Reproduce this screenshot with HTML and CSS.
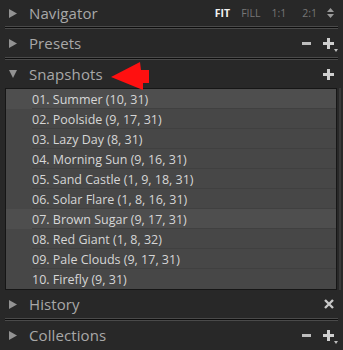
FILE: index.html
```html
<!DOCTYPE html>
<html lang="en">
<head>
    <meta charset="UTF-8">
    <title>Snapshots</title>
    <link rel="stylesheet" href="styles.css">
</head>
<body>
    <div class="panel">
        <div class="panel-header nav">
            <svg class="tri" width="8" height="9" viewBox="0 0 8 9"><polygon points="0,0 8,4.5 0,9"/></svg>
            <span class="title">Navigator</span>
            <div class="zoom-opts">
                <span class="active">FIT</span>
                <span>FILL</span>
                <span>1:1</span>
                <span class="wide">2:1</span>
                <svg class="updown" width="7" height="10" viewBox="0 0 7 10"><path d="M0 4 L3.5 0 L7 4 Z M0 6 L7 6 L3.5 10 Z" fill="#9a9a9a"/></svg>
            </div>
        </div>
        <div class="sep"></div>

        <div class="panel-header">
            <svg class="tri" width="8" height="9" viewBox="0 0 8 9"><polygon points="0,0 8,4.5 0,9"/></svg>
            <span class="title">Presets</span>
            <div class="tools">
                <span class="minus"></span>
                <span class="plus has-menu"></span>
            </div>
        </div>
        <div class="sep"></div>

        <div class="panel-header">
            <svg class="tri" width="8" height="8" viewBox="0 0 8 8"><polygon points="0,0 8,0 4,8"/></svg>
            <span class="title">Snapshots</span>
            <svg class="arrow" width="39" height="31" viewBox="0 0 39 31"><polygon points="0,17 29,2 30,10 38,10 38,23 32,23 32,30" fill="#ff1010"/></svg>
            <div class="tools">
                <span class="plus"></span>
            </div>
        </div>

        <div class="snap-box">
            <ul class="snap-list">
                <li class="hl"><span>01. Summer (10, 31)</span></li>
                <li><span>02. Poolside (9, 17, 31)</span></li>
                <li><span>03. Lazy Day (8, 31)</span></li>
                <li><span>04. Morning Sun (9, 16, 31)</span></li>
                <li><span>05. Sand Castle (1, 9, 18, 31)</span></li>
                <li><span>06. Solar Flare (1, 8, 16, 31)</span></li>
                <li class="hl"><span>07. Brown Sugar (9, 17, 31)</span></li>
                <li><span>08. Red Giant (1, 8, 32)</span></li>
                <li><span>09. Pale Clouds (9, 17, 31)</span></li>
                <li><span>10. Firefly (9, 31)</span></li>
            </ul>
            <div class="scroll-track"></div>
        </div>

        <div class="panel-header">
            <svg class="tri" width="8" height="9" viewBox="0 0 8 9"><polygon points="0,0 8,4.5 0,9"/></svg>
            <span class="title">History</span>
            <div class="tools">
                <svg class="close" width="10" height="10" viewBox="0 0 10 10"><path d="M1 1 L9 9 M9 1 L1 9" stroke="#c8c8c8" stroke-width="2.4"/></svg>
            </div>
        </div>
        <div class="sep"></div>

        <div class="panel-header">
            <svg class="tri" width="8" height="9" viewBox="0 0 8 9"><polygon points="0,0 8,4.5 0,9"/></svg>
            <span class="title">Collections</span>
            <div class="tools">
                <span class="minus"></span>
                <span class="plus has-menu"></span>
            </div>
        </div>
    </div>
</body>
</html>
```

FILE: styles.css
```css
/* 全局 */
body {
    margin: 0;
    background: #282828;
    font-family: "Open Sans", "Liberation Sans", sans-serif;
    width: 343px;
    height: 350px;
    overflow: hidden;
}

.panel {
    display: flex;
    flex-direction: column;
}

/* 面板标题栏 */
.panel-header {
    height: 28px;
    display: flex;
    align-items: center;
    padding: 0 9px 0 9px;
    position: relative;
}

.panel-header.nav {
    height: 26px;
}

.tri {
    fill: #939393;
    margin-right: 12px;
}

.title {
    font-size: 15px;
    color: #a8a8a8;
    letter-spacing: 0.1px;
}

/* 导航缩放选项 */
.zoom-opts {
    margin-left: auto;
    display: flex;
    align-items: center;
    gap: 11px;
    font-size: 10.5px;
    color: #777;
}

.zoom-opts .active {
    color: #f2f2f2;
    font-weight: bold;
}

.zoom-opts .wide {
    margin-left: 5px;
}

.updown {
    margin-left: -1px;
}

/* 分隔线 */
.sep {
    height: 1px;
    margin: 0 5px;
    border-top: 1px solid #4a4a4a;
    border-bottom: 1px solid #4a4a4a;
    background: #0d0d0d;
}

/* 右侧工具按钮 */
.tools {
    margin-left: auto;
    display: flex;
    align-items: center;
    gap: 12px;
}

.minus {
    width: 9px;
    height: 3px;
    background: #bdbdbd;
}

.plus {
    width: 11px;
    height: 11px;
    position: relative;
    background:
        linear-gradient(#cfcfcf, #cfcfcf) center / 11px 3px no-repeat,
        linear-gradient(#cfcfcf, #cfcfcf) center / 3px 11px no-repeat;
}

.plus.has-menu::after {
    content: "";
    position: absolute;
    right: -4px;
    bottom: -3px;
    border-left: 2px solid transparent;
    border-right: 2px solid transparent;
    border-top: 3px solid #bdbdbd;
}

/* 红色箭头 */
.arrow {
    position: absolute;
    left: 111px;
    top: 0;
}

/* 快照列表 */
.snap-box {
    display: flex;
    height: 202px;
}

.snap-list {
    list-style: none;
    margin: 0 0 0 5px;
    padding: 0;
    width: 330px;
    border: 1px solid #161616;
    background: #474747;
}

.snap-list li {
    height: 20px;
    padding-left: 26px;
}

.snap-list li.hl {
    background: #4e4e4e;
}

.snap-list li span {
    display: block;
    height: 17px;
    padding-top: 2px;
    line-height: 17px;
    font-size: 12.5px;
    color: #d6d6d6;
    border-bottom: 1px solid #404040;
}

.snap-list li:last-child span {
    border-bottom: none;
}

.scroll-track {
    width: 2px;
    margin-left: 2px;
    background: #3a3a3a;
}
```
